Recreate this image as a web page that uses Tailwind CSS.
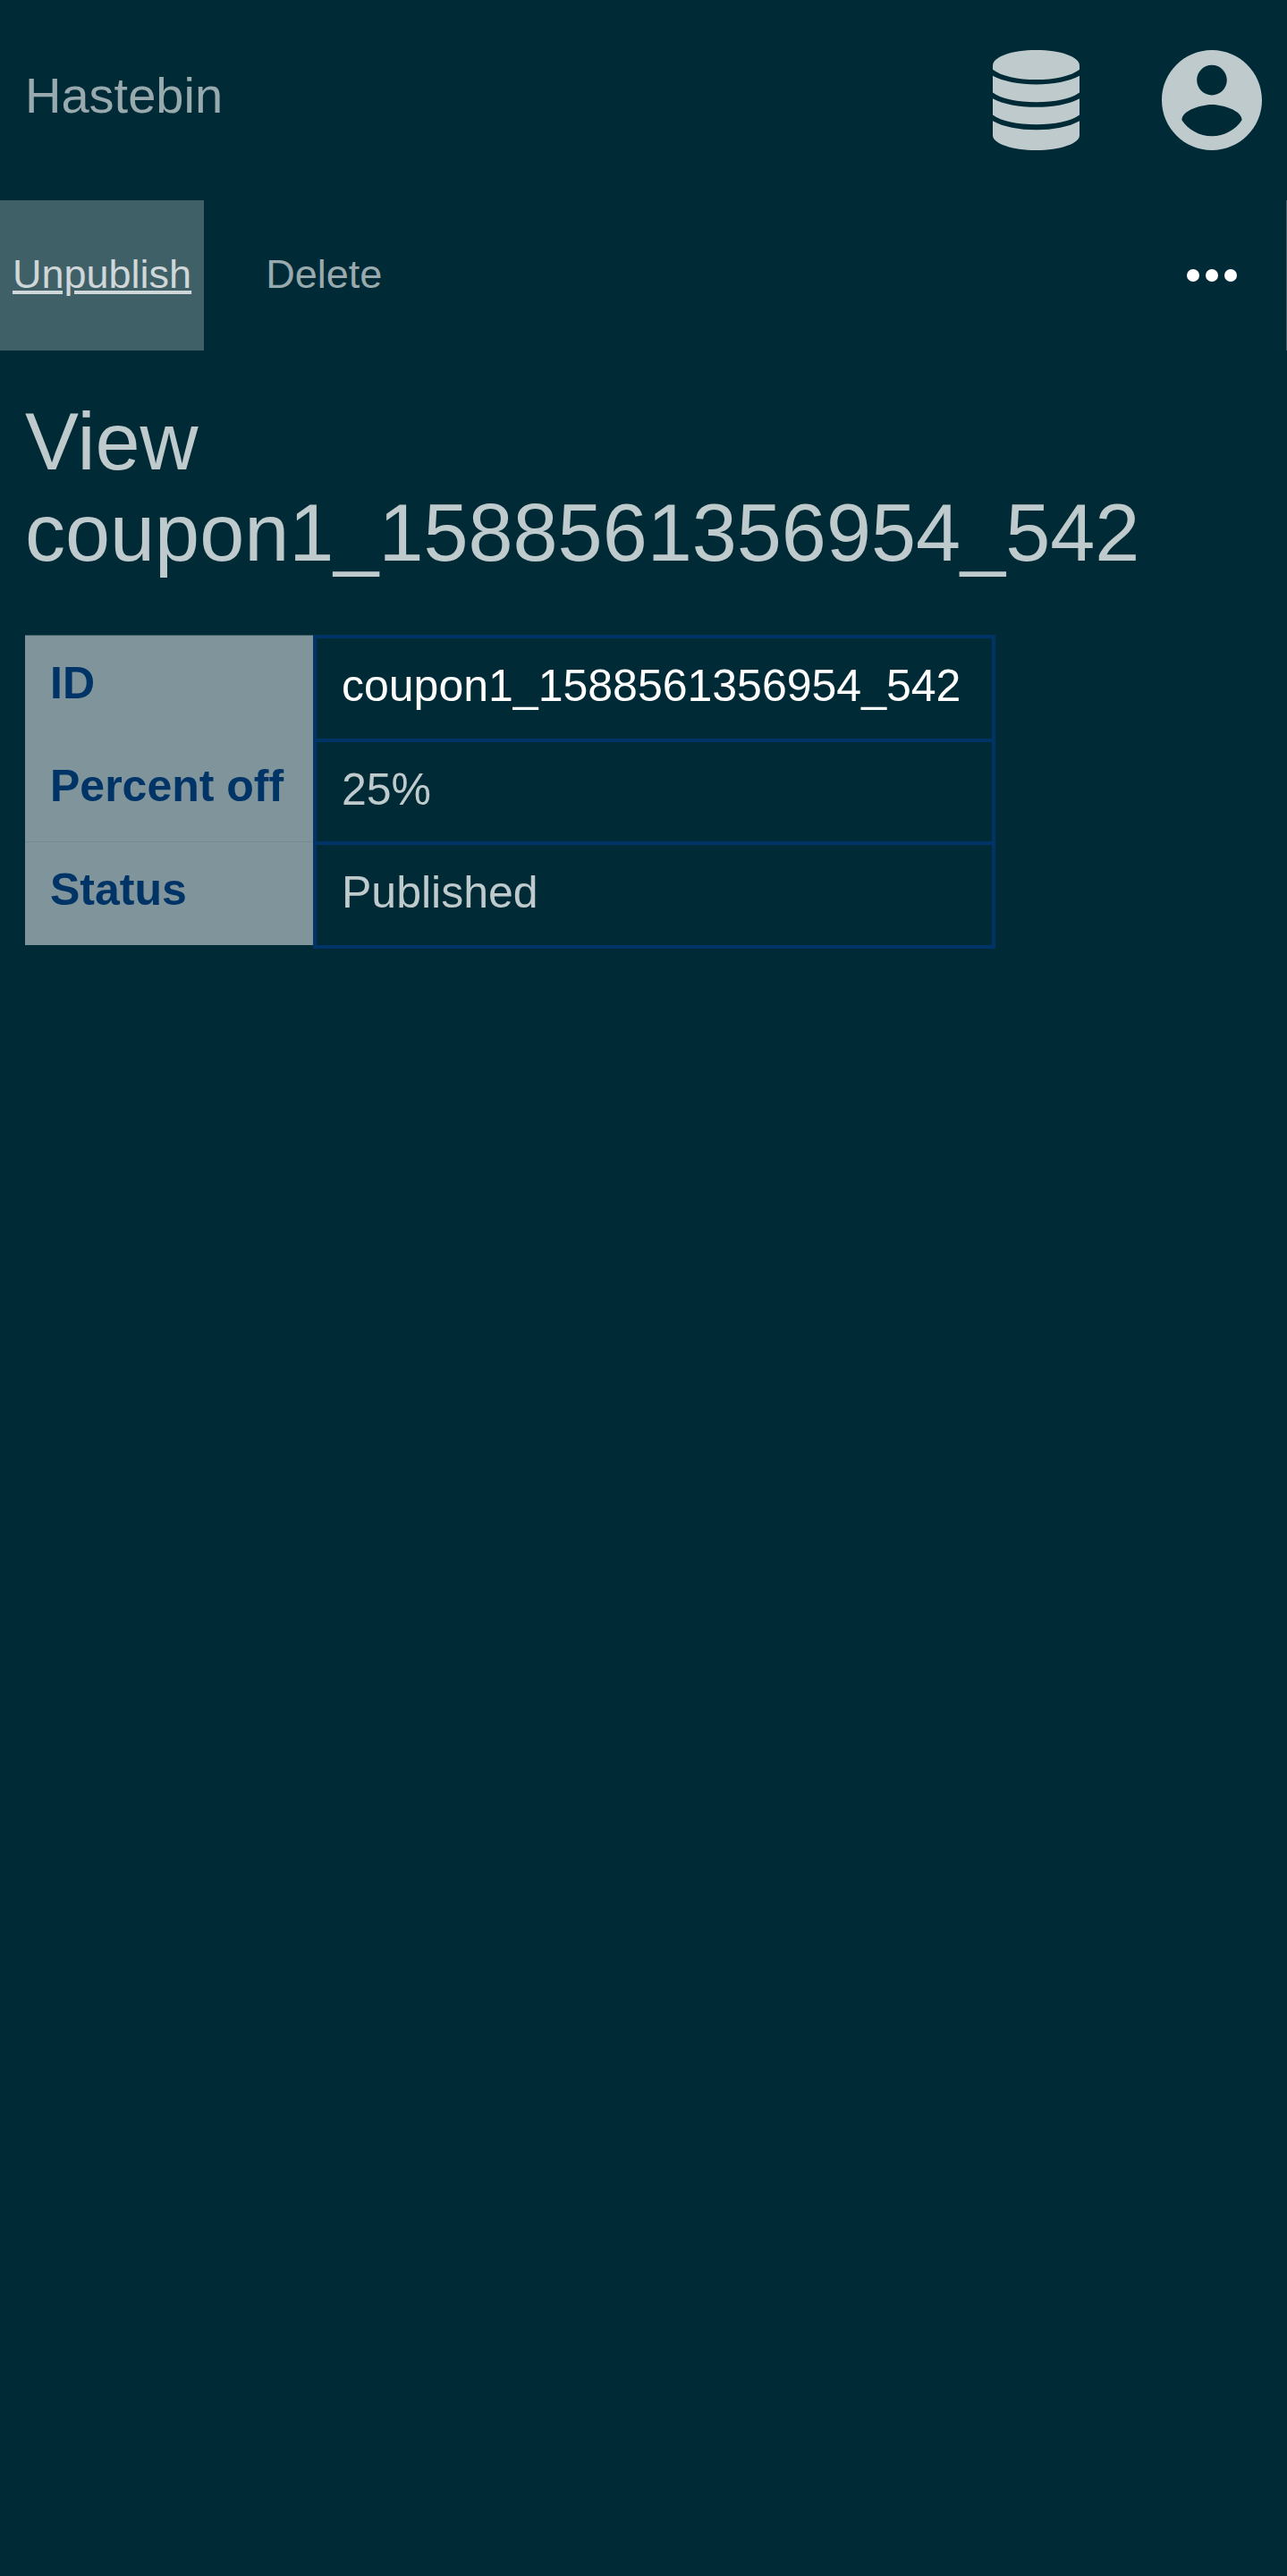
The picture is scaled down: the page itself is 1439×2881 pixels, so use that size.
<!DOCTYPE html>
<html lang="en">
<head>
<meta charset="utf-8">
<title>Hastebin</title>
<script src="https://cdn.jsdelivr.net/npm/@tailwindcss/browser@4"></script>
</head>
<body class="min-h-screen bg-[#002b36] font-['Liberation_Sans',Arial,sans-serif] text-[#bfcacd]">
<header class="flex items-start justify-between px-7 py-14">
  <a href="#" class="text-[56px] leading-[102px] text-[#99aaaf]">Hastebin</a>
  <div class="flex gap-[92px]">
    <button type="button" aria-label="Data">
      <svg class="block h-28 w-[97px]" viewBox="0 0 290 335" preserveAspectRatio="none" fill="currentColor" aria-hidden="true">
        <path d="M0 52C0 22 64 0 145 0S290 22 290 52V65C262 87 206 99 145 99S28 87 0 65Z"/>
        <path d="M0 86C35 105 88 115 145 115S255 105 290 86V142C262 163 206 174 145 174S28 163 0 142Z"/>
        <path d="M0 162C35 181 88 191 145 191S255 181 290 162V217C262 238 206 249 145 249S28 238 0 217Z"/>
        <path d="M0 237C35 257 88 267 145 267S255 257 290 237V285C290 313 226 335 145 335S0 313 0 285Z"/>
      </svg>
    </button>
    <button type="button" aria-label="Account">
      <svg class="block size-28" viewBox="2 2 20 20" fill="currentColor" aria-hidden="true">
        <path d="M12 2C6.48 2 2 6.48 2 12s4.48 10 10 10 10-4.48 10-10S17.52 2 12 2zm0 3c1.66 0 3 1.34 3 3s-1.34 3-3 3-3-1.34-3-3 1.34-3 3-3zm0 14.2c-2.5 0-4.71-1.28-6-3.22.03-1.99 4-3.08 6-3.08 1.99 0 5.97 1.09 6 3.08-1.29 1.94-3.5 3.22-6 3.22z"/>
      </svg>
    </button>
  </div>
</header>
<nav class="flex items-stretch border-r border-[#406068] text-[45px] leading-[165px] text-[#99aaaf]">
  <a href="#" class="h-[168px] bg-[#406068] px-3.5 text-[#cfd7d9] underline">Unpublish</a>
  <a href="#" class="ml-[55px] px-3.5">Delete</a>
  <button type="button" aria-label="More" class="ml-auto pr-[55px] text-white">
    <svg class="block h-3.5 w-14" viewBox="0 0 56 14" fill="currentColor" aria-hidden="true">
      <circle cx="7" cy="7" r="7"/><circle cx="28" cy="7" r="7"/><circle cx="49" cy="7" r="7"/>
    </svg>
  </button>
</nav>
<main class="px-7 pt-[51px]">
  <h1 class="text-[90px] leading-[102px]">View coupon1_1588561356954_542</h1>
  <table class="mt-[63px] border-separate border-spacing-0 text-left align-top text-[50px] leading-[58px]">
    <tbody>
      <tr class="h-[116px]">
        <th scope="row" class="w-[322px] border-t border-[#406068] bg-[#80959b] px-7 pt-6 align-top font-bold whitespace-nowrap text-[#003366]">ID</th>
        <td class="w-[763px] border-x-4 border-t-4 border-[#003366] px-7 pt-6 align-top text-white"><a href="#">coupon1_1588561356954_542</a></td>
      </tr>
      <tr class="h-[115px]">
        <th scope="row" class="bg-[#80959b] px-7 pt-6 align-top font-bold whitespace-nowrap text-[#003366]">Percent off</th>
        <td class="border-x-4 border-t-4 border-[#003366] px-7 pt-6 align-top">25%</td>
      </tr>
      <tr class="h-[120px]">
        <th scope="row" class="border-t border-b-4 border-t-[#738a91] border-b-[#002b36] bg-[#80959b] px-7 pt-6 align-top font-bold whitespace-nowrap text-[#003366]">Status</th>
        <td class="border-4 border-[#003366] px-7 pt-6 align-top">Published</td>
      </tr>
    </tbody>
  </table>
</main>
</body>
</html>
